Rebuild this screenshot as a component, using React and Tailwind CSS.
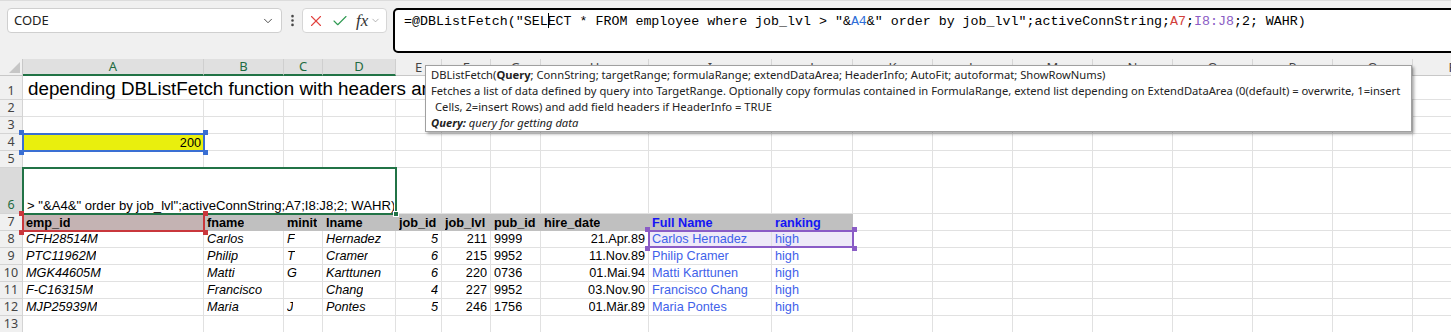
import React from 'react';
import { ChevronDown, X, Check, EllipsisVertical } from 'lucide-react';

const COLS = ['A', 'B', 'C', 'D', 'E', 'F', 'G', 'H', 'I', 'J', 'K', 'L', 'M', 'N', 'O', 'P', 'Q', 'R'];
const SELECTED_COLS = ['A', 'B', 'C', 'D'];

const HEADERS = ['emp_id', 'fname', 'minit', 'lname', 'job_id', 'job_lvl', 'pub_id', 'hire_date', 'Full Name', 'ranking'];

const ROWS = [
  ['CFH28514M', 'Carlos', 'F', 'Hernadez', '5', '211', '9999', '21.Apr.89', 'Carlos Hernadez', 'high'],
  ['PTC11962M', 'Philip', 'T', 'Cramer', '6', '215', '9952', '11.Nov.89', 'Philip Cramer', 'high'],
  ['MGK44605M', 'Matti', 'G', 'Karttunen', '6', '220', '0736', '01.Mai.94', 'Matti Karttunen', 'high'],
  ['F-C16315M', 'Francisco', '', 'Chang', '4', '227', '9952', '03.Nov.90', 'Francisco Chang', 'high'],
  ['MJP25939M', 'Maria', 'J', 'Pontes', '5', '246', '1756', '01.Mär.89', 'Maria Pontes', 'high'],
];

// per data column: alignment / style
const DATA_STYLE = [
  'italic',
  'italic',
  'italic',
  'italic',
  'italic justify-end',
  'justify-end',
  '',
  'justify-end',
  'text-[#3f62ea]',
  'text-[#3f62ea]',
];

const grid = 'border-r border-b border-[#e1e1e1]';

const Cell = ({ className = '', children, overlay }) => (
  <div className={`relative flex min-w-0 items-end whitespace-nowrap px-[3px] leading-[15px] ${className}`}>
    <span className="min-w-0 overflow-hidden">{children}</span>
    {overlay}
  </div>
);

const Empty = ({ count }) =>
  Array.from({ length: count }).map((_, i) => <Cell key={i} className={grid} />);

const RowHead = ({ n, active = false }) => (
  <div
    className={`flex items-end justify-center border-r border-b border-[#d4d4d4] font-['Noto_Sans',sans-serif] text-[12.5px] leading-[16px] ${
      active ? 'bg-[#dadada] text-[#1e6b41]' : 'bg-[#f0f0f0] text-[#444]'
    }`}
  >
    {n}
  </div>
);

// corner squares of a reference / selection frame
const Handles = ({ color }) => (
  <>
    <span className={`absolute -left-[3px] -top-[3px] h-[5px] w-[5px] ${color}`} />
    <span className={`absolute -right-[3px] -top-[3px] h-[5px] w-[5px] ${color}`} />
    <span className={`absolute -left-[3px] -bottom-[3px] h-[5px] w-[5px] ${color}`} />
    <span className={`absolute -right-[3px] -bottom-[3px] h-[5px] w-[5px] ${color}`} />
  </>
);

const RefFrame = ({ border, handle, className = '-inset-px' }) => (
  <span className={`pointer-events-none absolute z-10 ${className}`}>
    <span className={`absolute inset-0 border-2 ${border}`} />
    <Handles color={handle} />
  </span>
);

const FormulaBar = () => (
  <div className="flex h-[59px] items-start border-t border-[#dcdcdc] bg-[#f0f0f0] pl-[7px] pt-[7px]">
    <div className="flex h-[25px] w-[275px] items-center justify-between rounded-[4px] border border-[#cfcfcf] bg-white pl-[6px] pr-[6px] font-['Noto_Sans',sans-serif] text-[13px] text-[#222]">
      <span>CODE</span>
      <ChevronDown size={14} strokeWidth={1.6} className="text-[#444]" />
    </div>
    <div className="flex h-[25px] w-[20px] items-center justify-center text-[#444]">
      <EllipsisVertical size={15} strokeWidth={2.2} />
    </div>
    <div className="flex h-[25px] w-[85px] items-center rounded-[4px] border border-[#d6d6d6] bg-white pl-[4px]">
      <X size={18} strokeWidth={1.5} className="text-[#e2433f]" />
      <Check size={18} strokeWidth={1.5} className="ml-[6px] text-[#2f9a52]" />
      <span className="ml-[7px] font-['Liberation_Serif',serif] text-[17px] italic leading-none text-[#333]">fx</span>
      <ChevronDown size={11} strokeWidth={1.6} className="ml-[2px] text-[#999]" />
    </div>
    <div className="-mr-[10px] ml-[6px] h-[45px] flex-1 rounded-l-[5px] border-2 border-black bg-white pl-[9px] pt-[3px] font-['Liberation_Mono',monospace] text-[13.3px] leading-[17px] text-black">
      <span className="whitespace-pre">
        =@DBListFetch("SEL
        <span className="relative inline-block h-[15px] w-0 align-[-3px]">
          <span className="absolute left-0 top-0 h-full w-px bg-black" />
        </span>
        ECT * FROM employee where job_lvl {'>'} "&amp;<span className="text-[#2f6fd8]">A4</span>&amp;" order by job_lvl";activeConnString;
        <span className="text-[#d2403a]">A7</span>;<span className="text-[#8b5cc4]">I8:J8</span>;2; WAHR)
      </span>
    </div>
  </div>
);

const ColumnHeaders = () => (
  <>
    <div className="relative border-r border-b border-[#c8c8c8] bg-[#f0f0f0]">
      <svg className="absolute bottom-[2px] right-[2px]" width="11" height="11" viewBox="0 0 11 11">
        <path d="M11 0 L11 11 L0 11 Z" fill="#c6c6c6" />
      </svg>
    </div>
    {COLS.map((c) => {
      const sel = SELECTED_COLS.includes(c);
      return (
        <div
          key={c}
          className={`flex items-center justify-center border-r font-['Noto_Sans',sans-serif] text-[13px] leading-none ${
            sel
              ? 'border-b-2 border-r-[#cfcfcf] border-b-[#217346] bg-[#e0e0e0] text-[#1e6b41]'
              : 'border-b border-r-[#d6d6d6] border-b-[#c8c8c8] bg-[#f0f0f0] text-[#444]'
          }`}
        >
          {c}
        </div>
      );
    })}
  </>
);

const Tooltip = () => (
  <div className="absolute left-[425px] top-[65px] z-20 h-[67px] w-[987px] border border-[#a0a0a0] bg-white pl-[5px] pt-px font-['Noto_Sans',sans-serif] text-[11.2px] leading-[16px] text-[#222] shadow-[2px_2px_3px_rgba(0,0,0,0.35)]">
    <div>
      DBListFetch(<span className="font-bold">Query</span>; ConnString; targetRange; formulaRange; extendDataArea; HeaderInfo; AutoFit; autoformat; ShowRowNums)
    </div>
    <div>
      Fetches a list of data defined by query into TargetRange. Optionally copy formulas contained in FormulaRange, extend list depending on ExtendDataArea (0(default) = overwrite, 1=insert
    </div>
    <div className="pl-[4px]">Cells, 2=insert Rows) and add field headers if HeaderInfo = TRUE</div>
    <div className="italic">
      <span className="font-bold">Query:</span> query for getting data
    </div>
  </div>
);

export default function App() {
  return (
    <div className="relative h-[332px] w-[1451px] overflow-hidden bg-white font-['Liberation_Sans',Arial,sans-serif] text-[12.7px] text-black">
      <FormulaBar />

      <div className="grid grid-cols-[23px_181px_80px_39px_73px_46px_49px_50px_108px_123px_81px_80px_80px_80px_80px_80px_80px_80px_80px] grid-rows-[17px_24px_17px_17px_17px_17px_46px_17px_17px_17px_17px_17px_17px_17px]">
        <ColumnHeaders />

        {/* row 1: title overflows across the sheet */}
        <RowHead n={1} />
        <Cell className="col-span-18 border-b border-[#e1e1e1] pl-[5px] text-[18.8px] leading-[20px]">
          depending DBListFetch function with headers and formulas
        </Cell>

        <RowHead n={2} />
        <Empty count={18} />
        <RowHead n={3} />
        <Empty count={18} />

        {/* row 4: query parameter */}
        <RowHead n={4} />
        <Cell
          className="justify-end bg-[#e9ef0d]"
          overlay={<RefFrame border="border-[#3a6fd3]" handle="bg-[#3a6fd3]" className="-inset-px" />}
        >
          200
        </Cell>
        <Empty count={17} />

        <RowHead n={5} />
        <Empty count={18} />

        {/* row 6: cell in edit mode */}
        <RowHead n={6} active />
        <Cell
          className="col-span-4 bg-white pb-[1px] pl-[4px] pr-[2px] text-[13.1px]"
          overlay={
            <>
              <span className="absolute -inset-px z-10 border-2 border-[#217346]" />
              <span className="absolute -bottom-[3px] -right-[3px] z-10 h-[6px] w-[6px] border border-white bg-[#217346]" />
            </>
          }
        >
          {'> "&A4&" order by job_lvl";activeConnString;A7;I8:J8;2; WAHR)'}
        </Cell>
        <Empty count={14} />

        {/* row 7: field headers */}
        <RowHead n={7} />
        {HEADERS.map((h, i) => (
          <Cell
            key={h}
            className={`font-bold ${i === 0 ? 'bg-[#c4b3b3]' : 'bg-[#c0c0c0]'} ${i >= 8 ? 'text-[#1515f5]' : ''}`}
            overlay={
              i === 0 && (
                <RefFrame border="border-[#c9373c] border-t-0" handle="bg-[#c9373c]" className="-left-px -right-px top-0 bottom-[-1px]" />
              )
            }
          >
            {h}
          </Cell>
        ))}
        <Empty count={8} />

        {/* rows 8-12: fetched data */}
        {ROWS.map((row, r) => (
          <React.Fragment key={row[0]}>
            <RowHead n={8 + r} />
            {row.map((v, i) => (
              <Cell
                key={i}
                className={`${grid} ${DATA_STYLE[i]} ${r === 0 && i >= 8 ? 'bg-[#eeeaf8]' : ''}`}
                overlay={
                  r === 0 &&
                  i === 8 && (
                    <RefFrame border="border-[#8a5cc6]" handle="bg-[#8a5cc6]" className="-left-px top-[-1px] h-[18px] w-[206px]" />
                  )
                }
              >
                {v}
              </Cell>
            ))}
            <Empty count={8} />
          </React.Fragment>
        ))}

        <RowHead n={13} />
        <Empty count={18} />
      </div>

      <Tooltip />
    </div>
  );
}
